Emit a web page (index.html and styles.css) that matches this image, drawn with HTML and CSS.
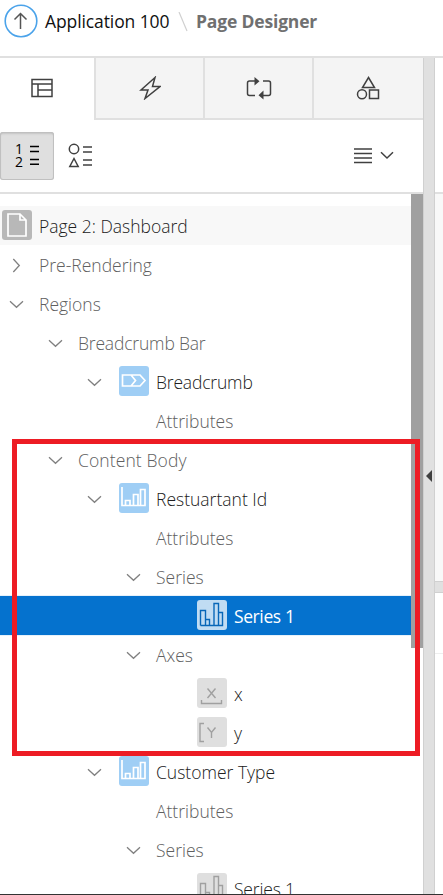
FILE: index.html
```html
<!DOCTYPE html>
<html lang="en">
<head>
<meta charset="utf-8">
<title>Page Designer</title>
<link rel="stylesheet" href="styles.css">
</head>
<body>
<svg class="defs" width="0" height="0">
  <symbol id="down" viewBox="0 0 15 9"><path d="M1 1.3 7.5 7.3 14 1.3"/></symbol>
  <symbol id="right" viewBox="0 0 9 15"><path d="M1.3 1 7.3 7.5 1.3 14"/></symbol>
  <symbol id="chart" viewBox="0 0 30 30"><path d="M3 4V22.5H26V6.5H21.5V22.5M19 22.5V11.5H14.5V22.5M11 22.5V17.5H6.5V22.5"/></symbol>
  <symbol id="bars" viewBox="0 0 30 30"><path d="M3.5 25.5V10.5H8.5V25.5M8.5 19.5H12.5V25.5M17 25.5V3.5H21.5V25.5M21.500 12.500H25.500V25.500H3.500"/></symbol>
</svg>
<div class="app">
  <header class="header">
    <svg class="up" width="34" height="34" viewBox="0 0 34 34"><circle cx="17" cy="17" r="15.800"/><path d="M16.500 25V9.500M10.500 15.500 16.500 9.500 22.500 15.500"/></svg>
    <span class="crumb">Application 100</span>
    <svg class="slash" width="10" height="20" viewBox="0 0 10 20"><path d="M1 0 9 19"/></svg>
    <span class="title">Page Designer</span>
  </header>
  <div class="workspace">
    <main class="left">
      <nav class="tabs">
        <div class="tab active"><svg width="22" height="20" viewBox="0 0 22 20"><path d="M1 1.500H21V18.500H1ZM1 6H21M7 6V18.500M7 12H21"/></svg></div>
        <div class="tab"><svg width="22" height="24" viewBox="0 0 22 24"><path d="M16 1.500 2 14H9L6 22.500 21 10.500H13.500Z"/></svg></div>
        <div class="tab"><svg width="26" height="24" viewBox="0 0 26 24"><path d="M9 19.500H3.500Q1.500 19.500 1.500 17.500V7Q1.500 5 3.500 5H9M17 5H22.500Q24.500 5 24.500 7V17.500Q24.500 19.500 22.500 19.500H17"/><path class="solid" d="M8.500 1 13.500 5.300 8.500 9.500ZM17.500 14.500 12.500 19.200 17.500 23.500Z"/></svg></div>
        <div class="tab"><svg width="24" height="24" viewBox="0 0 24 24"><path d="M12.500 1.500 18.500 11.500H6.500ZM13.500 14H22.500V22.500H13.500Z"/><circle cx="6" cy="18.300" r="4.500"/></svg></div>
      </nav>
      <div class="toolbar">
        <div class="toggle"><div class="digits"><span>1</span><span>2</span></div><svg width="10" height="20" viewBox="0 0 10 20"><path class="line" d="M0 1.500H9M0 6.500H9M0 14.500H9M0 19.200H9"/></svg></div>
        <svg class="kinds" width="26" height="26" viewBox="0 0 26 26"><circle cx="6" cy="6" r="4.700"/><path d="M15 4H24M15 9H24M15 17H24M15 22H24M6 15.500 10.200 23.500H1.800Z"/></svg>
        <svg class="menu" width="42" height="18" viewBox="0 0 42 18"><path d="M0 2H18M0 6.500H18M0 11H18M0 15.500H18M27 5.300 33 11 39 5.300"/></svg>
      </div>
      <div class="treewrap">
        <div class="tree">
          <div class="row page"><span class="icon gray"><svg viewBox="0 0 30 30"><path d="M6 4H18L24 10V26H6ZM18 4V10H24"/></svg></span><span class="label">Page 2: Dashboard</span></div>
          <div class="row l0 muted"><svg class="arrow side"><use href="#right"/></svg><span class="label">Pre-Rendering</span></div>
          <div class="row l0 muted"><svg class="arrow"><use href="#down"/></svg><span class="label">Regions</span></div>
          <div class="row l1 muted"><svg class="arrow"><use href="#down"/></svg><span class="label tight">Breadcrumb Bar</span></div>
          <div class="row l2"><svg class="arrow"><use href="#down"/></svg><span class="icon blue"><svg viewBox="0 0 30 30"><path d="M3.500 9H21L26 14.500 21 20H3.500ZM12 9 16.500 14.500 12 20"/></svg></span><span class="label tight">Breadcrumb</span></div>
          <div class="row leaf muted"><span class="label">Attributes</span></div>
          <div class="row l1 muted"><svg class="arrow"><use href="#down"/></svg><span class="label loose">Content Body</span></div>
          <div class="row l2"><svg class="arrow"><use href="#down"/></svg><span class="icon blue"><svg><use href="#chart"/></svg></span><span class="label">Restuartant Id</span></div>
          <div class="row leaf muted"><span class="label">Attributes</span></div>
          <div class="row l3 muted"><svg class="arrow"><use href="#down"/></svg><span class="label">Series</span></div>
          <div class="row deep selected"><span class="icon pale"><svg><use href="#bars"/></svg></span><span class="label">Series 1</span></div>
          <div class="row l3 muted"><svg class="arrow"><use href="#down"/></svg><span class="label">Axes</span></div>
          <div class="row deep"><span class="icon light"><svg viewBox="0 0 30 30"><path d="M10.500 10.500 18.500 20M18.500 10.500 10.500 20M4.500 22V25.500H24.500V22"/></svg></span><span class="label">x</span></div>
          <div class="row deep"><span class="icon light"><svg viewBox="0 0 30 30"><path d="M10.500 10.500 14.500 15.500 18.500 10.500M14.500 15.500V21M7 6.500H3V24.500H7"/></svg></span><span class="label">y</span></div>
          <div class="row l2"><svg class="arrow"><use href="#down"/></svg><span class="icon blue"><svg><use href="#chart"/></svg></span><span class="label">Customer Type</span></div>
          <div class="row leaf muted"><span class="label">Attributes</span></div>
          <div class="row l3 muted"><svg class="arrow"><use href="#down"/></svg><span class="label">Series</span></div>
          <div class="row deep"><span class="icon light"><svg><use href="#bars"/></svg></span><span class="label tight">Series 1</span></div>
        </div>
        <div class="scroll"></div>
      </div>
    </main>
    <div class="splitter"><svg width="6" height="12" viewBox="0 0 6 12"><path d="M6 0V12L0 6Z"/></svg></div>
    <aside class="right">
      <div class="r-top"></div>
      <div class="r-canvas"></div>
      <div class="r-split"></div>
      <div class="r-head"></div>
    </aside>
  </div>
  <div class="highlight"></div>
</div>
</body>
</html>
```
FILE: styles.css
```css
* { box-sizing: border-box; }
body { margin: 0; background: #fff; font-family: "Open Sans", "Noto Sans", sans-serif; font-size: 17.5px; color: #202020; }
svg { display: block; flex: none; fill: none; stroke: #404040; stroke-width: 1.5; }
.defs { position: absolute; }
.app { position: relative; width: 443px; height: 895px; overflow: hidden; display: flex; flex-direction: column; border-bottom: 1px solid #333; }
.header { height: 58px; flex: none; border-bottom: 2px solid #e0e0e0; display: flex; align-items: flex-start; padding: 4px 0 0 4px; white-space: nowrap; }
.header span { line-height: 34px; }
.up circle { stroke: #4ba3ea; stroke-width: 1.6; }
.up path { stroke: #555; }
.crumb { width: 133px; margin-left: 7px; color: #111; letter-spacing: -0.1px; }
.slash { margin-top: 8px; }
.slash path { stroke: #d0d0d0; stroke-width: 1.2; }
.title { margin-left: 8px; color: #707070; font-weight: 700; letter-spacing: -0.17px; }
.workspace { display: flex; flex: 1; min-height: 0; }
.left { width: 423px; display: flex; flex-direction: column; }
.tabs { display: flex; height: 62px; flex: none; }
.tab { width: 109px; display: flex; align-items: center; justify-content: center; background: #f4f4f4; border-left: 2px solid #e0e0e0; border-bottom: 2px solid #e0e0e0; }
.tab:last-child { width: 111px; padding-right: 2px; }
.tab.active { width: 94px; background: #fff; border-color: transparent; border-left: 0; padding-right: 11px; }
.tab .solid { fill: #404040; stroke: none; }
.toolbar { height: 74px; flex: none; display: flex; align-items: flex-start; padding-top: 12px; border-bottom: 2px solid #e0e0e0; }
.toggle { width: 54px; height: 48px; background: #dfdfdf; border-radius: 3px; box-shadow: inset 0 0 0 1px #c0c0c0, inset 0 2px 2px #c4c4c4; display: flex; align-items: flex-start; padding: 10px 0 0 15px; }
.toggle svg { margin: 3px 0 0 5px; }
.toggle .line { stroke: #000; }
.digits { width: 10px; display: flex; flex-direction: column; color: #000; font-size: 14px; font-weight: 500; }
.digits span { height: 13px; line-height: 13px; }
.kinds { margin: 11px 0 0 14px; }
.menu { margin: 15px 0 0 260px; }
.treewrap { display: flex; flex: 1; min-height: 0; }
.tree { width: 411px; padding-top: 12px; overflow: hidden; }
.scroll { width: 12px; height: 454px; background: #a0a0a0; }
.row { height: 39px; display: flex; align-items: center; white-space: nowrap; font-weight: 300; }
.label { line-height: 39px; padding-top: 1px; }
.tight { letter-spacing: -0.18px; }
.loose { letter-spacing: 0.1px; }
.muted { color: #606060; }
.page { background: #f8f8f8; padding-left: 2px; }
.l0 { padding-left: 9px; } .l1 { padding-left: 48px; } .l2 { padding-left: 87px; } .l3 { padding-left: 126px; }
.leaf { padding-left: 156px; } .deep { padding-left: 197px; }
.arrow { width: 15px; height: 9px; margin: 2px 15px 0 0; stroke: #808080; stroke-width: 1.3; }
.arrow.side { width: 9px; height: 15px; margin: 1px 18px 0 3px; }
.icon { width: 30px; height: 30px; border-radius: 3px; margin: -1px 7px 0 0; flex: none; }
.l2 .arrow { margin-right: 17px; }
.icon svg { width: 30px; height: 30px; stroke: #fff; stroke-width: 1.7; }
.gray { background: #b8b8b8; }
.blue { background: #9fcef5; }
.pale { background: #c0dcf3; }
.pale svg { stroke: #0867b8; stroke-width: 1.4; }
.light { background: #dfdfdf; }
.light svg { stroke: #a0a0a0; stroke-width: 1.4; }
.selected { background: #0572ce; color: #fff; font-weight: 400; letter-spacing: -0.4px; box-shadow: 0 -1px #e6f1fa, 0 1px #e6f1fa; }
.splitter { width: 12px; background: #e0e0e0; border: solid #d0d0d0; border-width: 0 1px; padding: 412px 0 0 2px; }
.splitter svg { fill: #404040; stroke: none; }
.right { width: 8px; display: flex; flex-direction: column; }
.r-top { height: 136px; border-bottom: 2px solid #e0e0e0; }
.r-canvas { height: 387px; background: #f8f8f8; }
.r-split { height: 12px; background: #e0e0e0; border: solid #d0d0d0; border-width: 1px 0; }
.r-head { height: 61px; border-bottom: 1px solid #eee; }
.highlight { position: absolute; left: 12px; top: 439px; width: 408px; height: 317px; border: 5px solid #ed1c24; }
```
